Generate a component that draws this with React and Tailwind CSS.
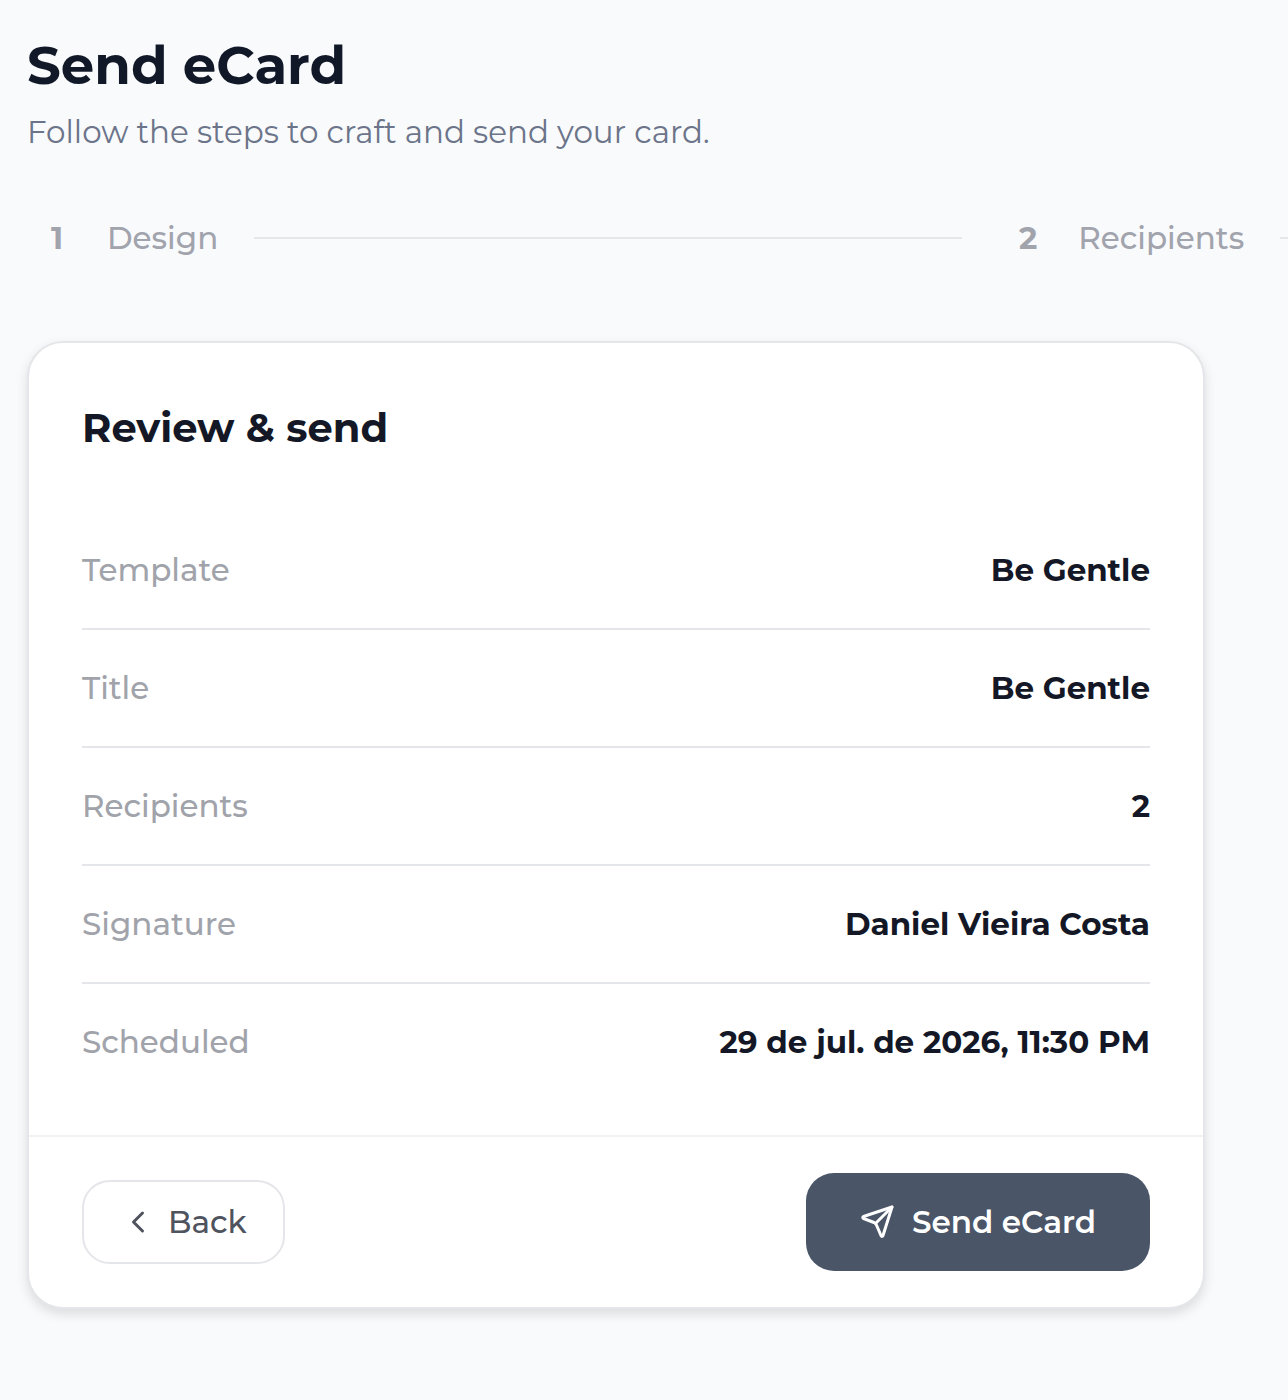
import { ChevronLeft } from "lucide-react";

const steps = ["Design", "Recipients"];

const summary = [
  { label: "Template", value: "Be Gentle" },
  { label: "Title", value: "Be Gentle" },
  { label: "Recipients", value: "2" },
  { label: "Signature", value: "Daniel Vieira Costa" },
  { label: "Scheduled", value: "29 de jul. de 2026, 11:30 PM" }
];

function PlaneIcon({ className }) {
  return (
    <svg
      viewBox="0 0 36 36"
      fill="none"
      stroke="currentColor"
      strokeWidth="3"
      strokeLinecap="round"
      strokeLinejoin="round"
      className={className}
      aria-hidden="true"
    >
      <path d="M32 3 3.500 12.500Q2 13.500 3.500 14.500L14 18.500Q15.500 19.200 16.200 20.500L21 31.500Q22 33.500 23 31.500Z" />
      <path d="M32 3 15.500 19.500" />
    </svg>
  );
}

export default function App() {

  return (

    <div className="min-h-screen overflow-hidden bg-[#f9fafc] px-[27px] pt-[35px] pb-16 font-['Montserrat','Inter',sans-serif]">

      {/* HEADER */}

      <header>
        <h1 className="text-[53px] leading-[60px] font-bold text-[#111827]">
          Send eCard
        </h1>
        <p className="mt-[17px] text-[31px] leading-10 text-[#6b7489]">
          Follow the steps to craft and send your card.
        </p>
      </header>

      {/* STEPS */}

      <ol className="mt-[66px] flex w-max text-[31px] leading-10 text-[#a1a3ad]">
        {steps.map((step, i) => (
          <li key={step} className="flex items-center">
            <span className="w-[60px] text-center font-bold">{i + 1}</span>
            <span className="ml-5 font-medium">{step}</span>
            <span className="mx-9 h-0.5 w-[708px] bg-[#e5e7eb]" />
          </li>
        ))}
      </ol>

      {/* CARD */}

      <section className="mt-[83px] mr-14 rounded-[36px] border-2 border-[#e5e6ea] bg-white shadow-[0_5px_12px_rgba(0,0,0,0.12)]">

        <div className="px-[53px] pt-[63px] pb-[33px]">

          <h2 className="text-[40px] leading-[44px] font-bold text-[#141826]">
            Review &amp; send
          </h2>

          <dl className="mt-[62px]">
            {summary.map((row) => (
              <div key={row.label} className="flex h-[118px] items-center justify-between border-b-2 border-[#e5e6ea] text-[31px] leading-10 last:border-transparent">
                <dt className="font-medium text-[#a1a3ab]">{row.label}</dt>
                <dd className="font-bold text-[#141826]">{row.value}</dd>
              </div>
            ))}
          </dl>

        </div>

        {/* ACTIONS */}

        <div className="flex items-center justify-between border-t-2 border-[#f1f2f4] px-[53px] py-9 text-[31px] leading-10">

          <button type="button" className="flex h-[84px] items-center gap-3 rounded-[28px] border-2 border-[#e5e6ea] px-9 font-medium text-[#4f535e]">
            <ChevronLeft className="size-9" />
            Back
          </button>

          <button type="button" className="flex h-[98px] items-center gap-4 rounded-[28px] bg-[#4a5568] px-[54px] font-semibold text-white">
            <PlaneIcon className="size-9" />
            Send eCard
          </button>

        </div>

      </section>

    </div>

  );

}
